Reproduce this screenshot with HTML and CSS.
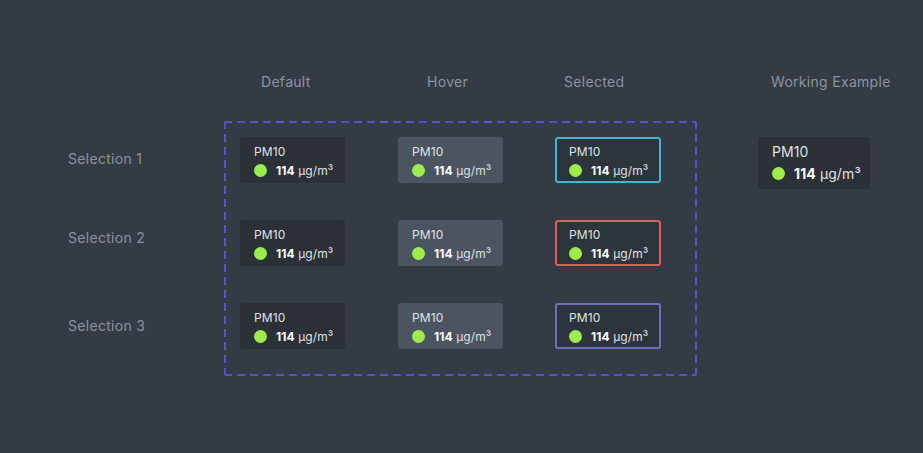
FILE: index.html
```html
<!DOCTYPE html>
<html>
<head>
<meta charset="utf-8">
<link rel="stylesheet" href="styles.css">
</head>
<body>
<div class="page">
  <div class="headers">
    <span class="spacer"></span>
    <span class="head">Default</span>
    <span class="head">Hover</span>
    <span class="head">Selected</span>
    <span class="head">Working Example</span>
  </div>
  <div class="main">
    <div class="labels">
      <div class="label label-1">Selection 1</div>
      <div class="label label-2">Selection 2</div>
      <div class="label label-3">Selection 3</div>
    </div>
    <div class="board">
      <div class="card"><div class="name">PM10</div><div class="value"><span class="dot"></span><b>114</b>&nbsp;µg/m³</div></div>
      <div class="card hover"><div class="name">PM10</div><div class="value"><span class="dot"></span><b>114</b>&nbsp;µg/m³</div></div>
      <div class="card selected cyan"><div class="name">PM10</div><div class="value"><span class="dot"></span><b>114</b>&nbsp;µg/m³</div></div>
      <div class="card"><div class="name">PM10</div><div class="value"><span class="dot"></span><b>114</b>&nbsp;µg/m³</div></div>
      <div class="card hover"><div class="name">PM10</div><div class="value"><span class="dot"></span><b>114</b>&nbsp;µg/m³</div></div>
      <div class="card selected red"><div class="name">PM10</div><div class="value"><span class="dot"></span><b>114</b>&nbsp;µg/m³</div></div>
      <div class="card"><div class="name">PM10</div><div class="value"><span class="dot"></span><b>114</b>&nbsp;µg/m³</div></div>
      <div class="card hover"><div class="name">PM10</div><div class="value"><span class="dot"></span><b>114</b>&nbsp;µg/m³</div></div>
      <div class="card selected purple"><div class="name">PM10</div><div class="value"><span class="dot"></span><b>114</b>&nbsp;µg/m³</div></div>
    </div>
    <div class="example">
      <div class="card big"><div class="name">PM10</div><div class="value"><span class="dot"></span><b>114</b>&nbsp;µg/m³</div></div>
    </div>
  </div>
</div>
</body>
</html>
```
FILE: styles.css
```css
* { box-sizing: border-box; }
html, body {
  margin: 0;
  padding: 0;
  background: #343b45;
  font-family: Inter, "Noto Sans", sans-serif;
  width: 923px;
  height: 453px;
  overflow: hidden;
}
.page { padding-top: 73px; }
.headers {
  display: grid;
  grid-template-columns: 261px 166px 137px 207px auto;
  height: 18px;
}
.head {
  font-size: 14px;
  line-height: 18px;
  letter-spacing: 0.3px;
  color: #8b939d;
  white-space: nowrap;
}
.main {
  display: flex;
  margin-top: 30px;
}
.labels {
  width: 224px;
  padding-left: 68px;
  display: flex;
  flex-direction: column;
}
.label {
  font-size: 14px;
  line-height: 18px;
  letter-spacing: 0.3px;
  color: #8b939d;
}
.label-1 { margin-top: 29px; }
.label-2 { margin-top: 61px; }
.label-3 { margin-top: 70px; }
.board {
  width: 473px;
  height: 255px;
  padding: 16px;
  display: grid;
  grid-template-columns: 105px 105px 105px;
  grid-template-rows: 46px 46px 46px;
  column-gap: 53px;
  row-gap: 37px;
  align-content: start;
  background-image:
    repeating-linear-gradient(90deg, #5a4fcf 0 8px, transparent 8px 13px),
    repeating-linear-gradient(90deg, #5a4fcf 0 8px, transparent 8px 13px),
    repeating-linear-gradient(180deg, #5a4fcf 0 8px, transparent 8px 13px),
    repeating-linear-gradient(180deg, #5a4fcf 0 8px, transparent 8px 13px);
  background-size: 100% 2px, 100% 2px, 2px 100%, 2px 100%;
  background-position: left top, left bottom, left top, right top;
  background-repeat: no-repeat;
  border-radius: 2px;
}
.card {
  background: #2c3137;
  border-radius: 3px;
  padding: 7px 0 0 14px;
  height: 46px;
  color: #e4e6e9;
}
.card.hover { background: #4b5560; }
.card.selected {
  background: #2e343b;
  border: 2px solid;
  padding: 5px 0 0 12px;
  width: 106px;
  margin-left: -1px;
}
.card.cyan { border-color: #3db6d3; }
.card.red { border-color: #e25c5c; }
.card.purple { border-color: #6c72c2; }
.name {
  font-size: 12px;
  line-height: 15px;
  letter-spacing: 0.1px;
  color: #dfe1e4;
}
.value {
  display: flex;
  align-items: center;
  margin-top: 4px;
  font-size: 12px;
  line-height: 15px;
  letter-spacing: 0.1px;
  color: #dfe1e4;
}
.value b {
  font-weight: 700;
  color: #ffffff;
}
.dot {
  width: 13px;
  height: 13px;
  border-radius: 50%;
  background: #9ced4b;
  margin-right: 9px;
}
.example {
  margin-left: 61px;
  padding-top: 16px;
}
.card.big {
  width: 112px;
  height: 52px;
  padding: 6px 0 0 14px;
}
.card.big .name,
.card.big .value {
  font-size: 14px;
  line-height: 17px;
}
.card.big .value { margin-top: 5px; }
.card.big .dot { margin-right: 9px; }
```
